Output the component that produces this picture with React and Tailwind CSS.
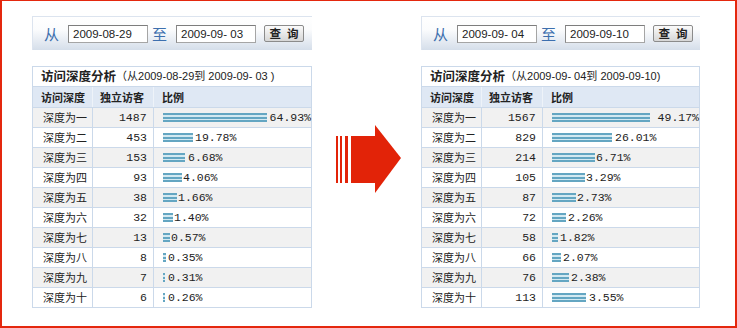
const cjk = "font-['Noto_Sans_CJK_SC',sans-serif]";
const sans = "font-['Liberation_Sans','Noto_Sans_CJK_SC',sans-serif]";
const mono = "font-['Liberation_Mono',monospace]";

const bar =
  'h-[9px] shrink-0 bg-[linear-gradient(to_bottom,#64a6c2_0px,#64a6c2_2px,#d3e9f1_2px,#d3e9f1_4px,#64a6c2_4px,#64a6c2_6px,#d3e9f1_6px,#d3e9f1_7px,#64a6c2_7px,#64a6c2_9px)]';

const panels = [
  {
    from: '2009-08-29',
    to: '2009-09- 03',
    range: ['2009-08-29', '2009-09- 03 )'],
    w: 'w-[280px]',
    rows: [
      ['深度为一', 1487, 104, '64.93%', 3],
      ['深度为二', 453, 30, '19.78%', 2],
      ['深度为三', 153, 22, '6.68%', 3],
      ['深度为四', 93, 19, '4.06%', 1],
      ['深度为五', 38, 14, '1.66%', 1],
      ['深度为六', 32, 10, '1.40%', 1],
      ['深度为七', 13, 7, '0.57%', 1],
      ['深度为八', 8, 3, '0.35%', 2],
      ['深度为九', 7, 2, '0.31%', 3],
      ['深度为十', 6, 2, '0.26%', 3],
    ],
  },
  {
    from: '2009-09- 04',
    to: '2009-09-10',
    range: ['2009-09- 04', '2009-09-10)'],
    w: 'w-[279px]',
    rows: [
      ['深度为一', 1567, 98, '49.17%', 8],
      ['深度为二', 829, 60, '26.01%', 3],
      ['深度为三', 214, 43, '6.71%', 1],
      ['深度为四', 105, 33, '3.29%', 1],
      ['深度为五', 87, 24, '2.73%', 1],
      ['深度为六', 72, 14, '2.26%', 2],
      ['深度为七', 58, 6, '1.82%', 2],
      ['深度为八', 66, 9, '2.07%', 2],
      ['深度为九', 76, 17, '2.38%', 2],
      ['深度为十', 113, 34, '3.55%', 3],
    ],
  },
];

const DateBox = ({ value }) => (
  <div className={`w-[80px] h-[18px] bg-white border border-[#a5a5a5] border-t-[#7d7d7d] border-l-[#8a8a8a] pl-[4px] text-[11.5px] leading-[16px] text-[#222] whitespace-pre ${sans}`}>
    {value}
  </div>
);

const Panel = ({ p }) => (
  <div className={p.w}>
    <div className="h-[34px] flex items-center pl-[11px] border-t border-l border-[#dce4ef] bg-[linear-gradient(to_bottom,#ffffff_0%,#fbfcfd_38%,#d5deea_100%)]">
      <span className={`text-[15px] leading-none text-[#3d6fae] ${cjk}`}>从</span>
      <div className="ml-[9px]">
        <DateBox value={p.from} />
      </div>
      <span className={`ml-[4px] text-[15px] leading-none text-[#3d6fae] ${cjk}`}>至</span>
      <div className="ml-[9px]">
        <DateBox value={p.to} />
      </div>
      <button className={`ml-[8px] w-[40px] h-[17px] flex items-center justify-center gap-[6px] rounded-[2px] border border-[#8b8b8b] bg-[linear-gradient(to_bottom,#fbfbfb,#d6d6d6)] text-[11.5px] leading-none font-bold text-[#222] ${cjk}`}>
        <span>查</span>
        <span>询</span>
      </button>
    </div>

    <div className="mt-[16px] border-l border-r border-[#cbd9ea]">
      <div className="h-[21px] flex items-center pl-[8px] border-t border-b border-[#cbd9ea] bg-white text-[#222]">
        <span className={`text-[12.5px] font-bold ${cjk}`}>访问深度分析</span>
        <span className={`text-[11px] whitespace-pre ${sans}`}>
          （从{p.range[0]}到 {p.range[1]}
        </span>
      </div>

      <div className={`h-[21px] flex bg-[#dfe8f4] border-b border-[#cbd9ea] text-[11px] font-bold text-[#222] ${cjk}`}>
        <div className="w-[60px] border-r border-[#eef3f9] pl-[8px] leading-[20px]">访问深度</div>
        <div className="w-[61px] border-r border-[#eef3f9] pl-[7px] leading-[20px]">独立访客</div>
        <div className="flex-1 pl-[8px] leading-[20px]">比例</div>
      </div>

      {p.rows.map(([label, count, width, pct, gap], i) => (
        <div
          key={label}
          className={`h-[20px] flex border-b border-[#cbd9ea] text-[#222] ${i % 2 === 0 ? 'bg-[#f1f1f1]' : 'bg-white'}`}
        >
          <div className={`w-[60px] border-r border-[#cbd9ea] pl-[10px] text-[11px] leading-[19px] ${cjk}`}>{label}</div>
          <div className={`w-[61px] border-r border-[#cbd9ea] pr-[6px] text-right text-[11.5px] leading-[20px] ${mono}`}>{count}</div>
          <div className="flex-1 flex items-center pl-[9px]">
            <div className={bar} style={{ width }} />
            <span className={`text-[11.5px] leading-none ${mono}`} style={{ marginLeft: gap }}>
              {pct}
            </span>
          </div>
        </div>
      ))}
    </div>
  </div>
);

const Arrow = () => (
  <svg width="65" height="68" viewBox="0 0 65 68">
    <g fill="#e22308">
      <rect x="0" y="11" width="2" height="47" />
      <rect x="4" y="11" width="2" height="47" />
      <rect x="9" y="11" width="3" height="47" />
      <rect x="15" y="11" width="25" height="47" />
      <polygon points="39,0 65,33 39,68" />
    </g>
  </svg>
);

export default function App() {
  return (
    <div className="w-[737px] h-[328px] overflow-hidden bg-white border-l-2 border-t border-r-2 border-b-2 border-[#e4280e] flex pl-[30px] pt-[15px]">
      <Panel p={panels[0]} />
      <div className="ml-[24px] mt-[109px] w-[65px]">
        <Arrow />
      </div>
      <div className="ml-[20px]">
        <Panel p={panels[1]} />
      </div>
    </div>
  );
}
